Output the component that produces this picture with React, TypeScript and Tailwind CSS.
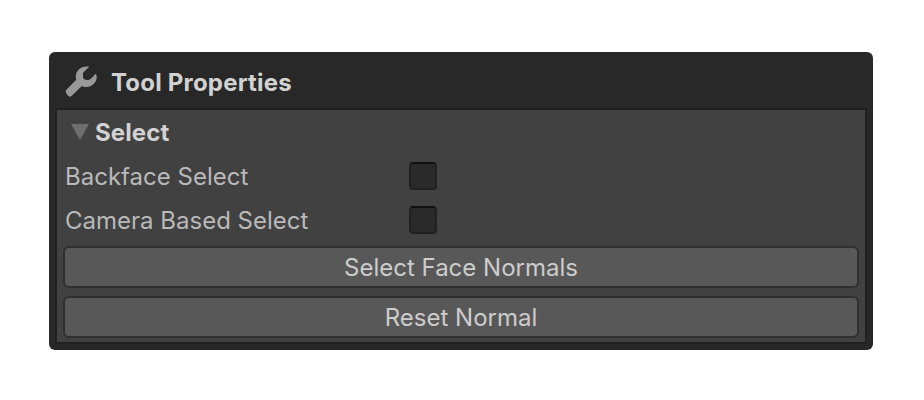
const rows = ["Backface Select", "Camera Based Select"];
const actions = ["Select Face Normals", "Reset Normal"];

function WrenchIcon() {
  return (
    <svg width="34" height="34" viewBox="0 0 34 34" className="shrink-0">
      <path
        d="M25.2 1.8 C19 0 11.8 4.5 11.8 11.3 Q11.8 13.3 12.3 14.8 L2.1 25 Q1.2 26.2 1.9 27.6 Q3 30.2 5.2 31.6 Q6.4 32.1 7.8 30.8 L17.8 20.9 C24.7 24.6 32.8 19 32.7 12 Q32.7 10 31.8 8.7 L26.8 13.8 Q25.8 14.9 24.4 14.9 L21.2 14.8 Q19.4 14.6 19.2 12.6 L18.9 9.4 Q18.8 7.8 19.8 6.9 Z"
        fill="#999999"
      />
    </svg>
  );
}

export default function App() {
  return (
    <div className="h-[400px] w-[924px] bg-white pl-[49px] pt-[52px] font-['Inter',sans-serif] text-[24px] font-[370] leading-[30px] text-[#b9b9b9]">
      <div className="h-[298px] w-[824px] rounded-[6px] bg-[#282828] px-[6px]">
        <header className="flex h-[56px] items-center pl-[9px] pt-[4px]">
          <WrenchIcon />
          <h1 className="ml-[13px] pt-[2px] font-bold tracking-[0.2px] text-[#d2d2d2]">Tool Properties</h1>
        </header>
        <section className="h-[236px] border-2 border-[#212121] bg-[#414141] px-[6px]">
          <h2 className="flex h-[44px] items-center font-bold tracking-[0.1px] text-[#d2d2d2]">
            <svg width="18" height="16" viewBox="0 0 18 16" className="ml-[8px] mr-[6px]">
              <path d="M0 0H18L9 16Z" fill="#6e6e6e" />
            </svg>
            <span className="pt-[2px]">Select</span>
          </h2>
          {rows.map((label) => (
            <label key={label} className="flex h-[44px] items-center pl-[2px]">
              <span className="w-[344px] pt-[2px]">{label}</span>
              <span className="size-[28px] rounded-[4px] border-2 border-[#212121] border-t-[#101010] bg-[#2a2a2a]" />
            </label>
          ))}
          <div className="flex flex-col gap-[8px] pt-[4px]">
            {actions.map((label) => (
              <button key={label} className="h-[42px] w-full rounded-[6px] border-2 border-[#303030] bg-[#585858] pt-[2px] text-[#cccccc]">
                {label}
              </button>
            ))}
          </div>
        </section>
      </div>
    </div>
  );
}
